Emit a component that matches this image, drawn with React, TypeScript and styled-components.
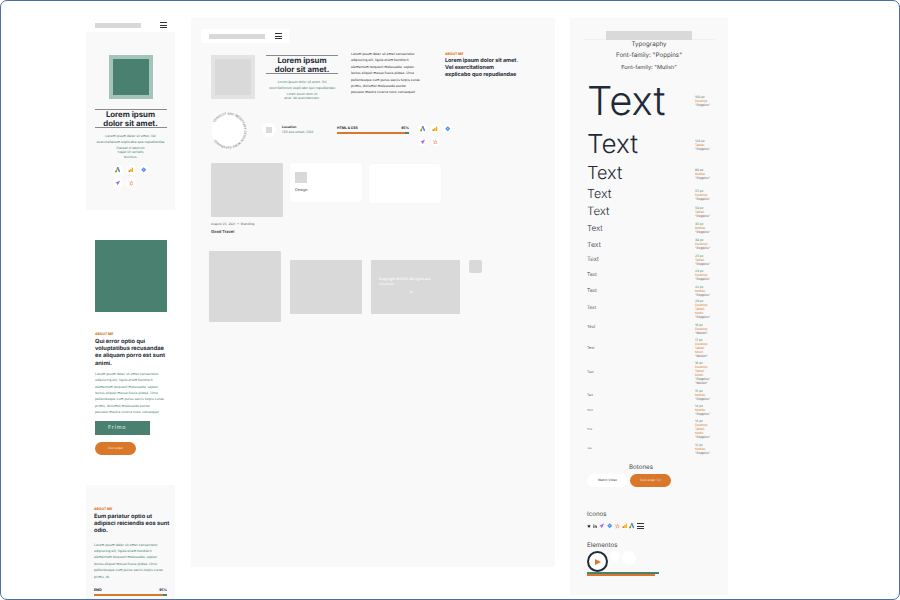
import React from 'react';
import styled, { createGlobalStyle } from 'styled-components';

const GlobalStyle = createGlobalStyle`
  html, body { margin: 0; padding: 0; background: #fff; }
  * { box-sizing: border-box; }
`;

const font = `Inter, "Liberation Sans", sans-serif`;

const green = '#4a8070';
const orange = '#d9772b';
const ink = '#1f2a37';
const panel = '#f9f9f9';
const gray = '#d9d9d9';

const Frame = styled.div`
  width: 900px;
  height: 600px;
  overflow: hidden;
  display: flex;
  align-items: flex-start;
  gap: 15px;
  padding: 17px 0 0 85px;
  border: 1px solid #4d6fa3;
  border-radius: 7px;
  background: #fff;
  font-family: ${font};
  color: ${ink};
  text-rendering: geometricPrecision;
`;

/* ---------- shared bits ---------- */

const Bar = styled.div<{ $w: number; $h?: number }>`
  width: ${p => p.$w}px;
  height: ${p => p.$h ?? 5}px;
  background: ${gray};
`;

const Burger = styled.div`
  width: 7px;
  height: 6px;
  border-top: 1px solid #333;
  border-bottom: 1px solid #333;
  position: relative;
  flex: none;
  &::after {
    content: '';
    position: absolute;
    left: 0;
    right: 0;
    top: 1.5px;
    height: 1px;
    background: #333;
  }
`;

const HeroTitle = styled.div<{ $w: number }>`
  width: ${p => p.$w}px;
  border-top: 1px solid #8a8a8a;
  border-bottom: 1px solid #8a8a8a;
  height: 19px;
  text-align: center;
  font-size: 7.8px;
  line-height: 8.6px;
  font-weight: 700;
  color: ${ink};
`;

const Small = styled.div<{ $color?: string; $size?: number; $lh?: number; $center?: boolean }>`
  font-size: ${p => p.$size ?? 3.4}px;
  line-height: ${p => p.$lh ?? 6.4}px;
  color: ${p => p.$color ?? green};
  text-align: ${p => (p.$center ? 'center' : 'left')};
  white-space: pre;
`;

const Kicker = styled.div`
  font-size: 3.4px;
  line-height: 5px;
  font-weight: 800;
  color: ${orange};
  margin-bottom: 1px;
`;

const AboutHeading = styled.div<{ $size?: number; $lh?: number }>`
  font-size: ${p => p.$size ?? 5.7}px;
  line-height: ${p => p.$lh ?? 7.2}px;
  font-weight: 700;
  color: ${ink};
  white-space: pre;
`;

const IconGrid = styled.div<{ $size: number; $gap: number; $w: number }>`
  width: ${p => p.$w}px;
  display: flex;
  flex-wrap: wrap;
  gap: ${p => p.$gap}px;
  & > div {
    width: ${p => p.$size}px;
    height: ${p => p.$size}px;
  }
`;

const Badge = styled.div`
  border-radius: 50%;
  background: #fff;
  display: flex;
  align-items: center;
  justify-content: center;
`;

const Glyph = ({ kind, size = 5.5 }: { kind: string; size?: number }) => {
  const s = { width: size, height: size, flex: 'none' };
  if (kind === 'ads')
    return (
      <svg viewBox="0 0 10 10" style={s}>
        <path d="M5 1L2 8" stroke="#f4b400" strokeWidth="2.6" strokeLinecap="round" />
        <path d="M5 1L8 8" stroke="#4285f4" strokeWidth="2.6" strokeLinecap="round" />
        <circle cx="2" cy="8" r="1.6" fill="#34a853" />
      </svg>
    );
  if (kind === 'analytics')
    return (
      <svg viewBox="0 0 10 10" style={s}>
        <rect x="1" y="6" width="2.6" height="3" fill="#e37400" />
        <rect x="4" y="3.5" width="2.6" height="5.5" fill="#f9ab00" />
        <rect x="7" y="1" width="2.6" height="8" fill="#f9ab00" />
      </svg>
    );
  if (kind === 'diamond')
    return (
      <svg viewBox="0 0 10 10" style={s}>
        <path d="M5 0.5L9.5 5L5 9.5L0.5 5Z" fill="#4a8cf0" />
        <circle cx="5" cy="5" r="1.5" fill="#a9c9ff" />
      </svg>
    );
  if (kind === 'plane')
    return (
      <svg viewBox="0 0 10 10" style={s}>
        <path d="M9.5 0.5L0.5 5L3.5 6.2L4.5 9.5L6.5 7Z" fill="#a66cf0" />
      </svg>
    );
  if (kind === 'star')
    return (
      <svg viewBox="0 0 10 10" style={s}>
        <path d="M5 0.5L6.4 3.6L9.6 4L7.2 6.2L7.9 9.5L5 7.8L2.1 9.5L2.8 6.2L0.4 4L3.6 3.6Z" fill="#222" />
      </svg>
    );
  if (kind === 'linked')
    return (
      <svg viewBox="0 0 10 10" style={s}>
        <rect x="1" y="3.5" width="2" height="6" fill="#222" />
        <circle cx="2" cy="1.6" r="1.2" fill="#222" />
        <path d="M4.2 9.5V3.5H6V4.4C7 3 9.6 3 9.6 5.6V9.5H7.6V6.2C7.6 5 6.2 5 6.2 6.2V9.5Z" fill="#222" />
      </svg>
    );
  return (
    <svg viewBox="0 0 10 10" style={s}>
      <circle cx="6.5" cy="6.5" r="2.4" fill="none" stroke="#f28b6d" strokeWidth="1.4" />
      <path d="M6.5 4V1.5M4.5 5L1.5 2.5M4.6 8L2.5 9.5" stroke="#f28b6d" strokeWidth="1.1" />
    </svg>
  );
};

const kinds = ['ads', 'analytics', 'diamond', 'plane', 'hub'];

const SkillIcons = ({ w, size, gap }: { w: number; size: number; gap: number }) => (
  <IconGrid $w={w} $size={size} $gap={gap}>
    {kinds.map(k => (
      <Badge key={k}>
        <Glyph kind={k} />
      </Badge>
    ))}
  </IconGrid>
);

const SkillHead = styled.div`
  display: flex;
  justify-content: space-between;
  font-size: 3.4px;
  line-height: 5px;
  font-weight: 700;
  color: ${ink};
`;

const Progress = styled.div`
  height: 2px;
  background: ${green};
  margin-top: 1px;
  & > div {
    height: 100%;
    background: ${orange};
  }
`;

const aboutBody = `Lorem ipsum dolor sit amet consectetur
adipiscing elit, ligula etiam hendrerit
elementum torquent malesuada, sapien
lectus aliquet massa fusce platea. Urna
pellentesque cum purus sociis turpis curae
primis, dictumst malesuada auctor
posuere mostra viverra nunc consequat`;

/* ---------- mobile column ---------- */

const MobileCol = styled.div`
  width: 89px;
  flex: none;
  display: flex;
  flex-direction: column;
`;

const MobileTop = styled.div`
  height: 14px;
  display: flex;
  align-items: center;
  justify-content: space-between;
  padding: 0 8px 0 9px;
`;

const HeroPanel = styled.div`
  height: 178px;
  background: ${panel};
  display: flex;
  flex-direction: column;
  align-items: center;
  padding-top: 23px;
`;

const Portrait = styled.div<{ $outer: string; $inner: string }>`
  width: 44px;
  height: 44px;
  padding: 4px;
  background: ${p => p.$outer};
  flex: none;
  & > div {
    width: 100%;
    height: 100%;
    background: ${p => p.$inner};
  }
`;

const HeroCopy = styled.div<{ $top: number }>`
  margin-top: ${p => p.$top}px;
  display: flex;
  flex-direction: column;
  align-items: center;
`;

const HeroLead = styled(Small)`
  margin-top: 5px;
`;

const HeroIcons = styled.div`
  margin-top: 6px;
`;

const MobileAbout = styled.div`
  padding: 30px 8px 0 9px;
  height: 275px;
`;

const GreenBlock = styled.div`
  width: 72px;
  height: 72px;
  background: ${green};
  margin-bottom: 20px;
`;

const BodyGap = styled.div<{ $gap: number }>`
  margin-top: ${p => p.$gap}px;
`;

const Frimo = styled.div`
  margin-top: 5px;
  width: 55px;
  height: 14px;
  background: ${green};
  color: #dfeee9;
  font-size: 5.5px;
  letter-spacing: 0.7px;
  line-height: 14px;
  padding-left: 13px;
`;

const PillButton = styled.div<{ $w: number; $h: number; $bg: string; $fg: string }>`
  width: ${p => p.$w}px;
  height: ${p => p.$h}px;
  border-radius: ${p => p.$h / 2}px;
  background: ${p => p.$bg};
  color: ${p => p.$fg};
  font-size: 3.2px;
  line-height: ${p => p.$h}px;
  text-align: center;
  flex: none;
`;

const MobileDownload = styled(PillButton)`
  margin-top: 7px;
`;

const MobileSkills = styled.div`
  background: ${panel};
  height: 120px;
  padding: 22px 8px 0 8px;
`;

const MobileSkillBlock = styled.div`
  margin-top: 8px;
`;

/* ---------- desktop column ---------- */

const DesktopCol = styled.div`
  width: 364px;
  height: 549px;
  flex: none;
  margin-left: 1px;
  background: ${panel};
  padding: 11px 0 0 20px;
  display: flex;
  flex-direction: column;
`;

const DesktopTop = styled.div`
  width: 88px;
  height: 14px;
  margin-left: -10px;
  background: #fff;
  display: flex;
  align-items: center;
  gap: 10px;
  padding-left: 8px;
`;

const HeroRow = styled.div`
  margin-top: 12px;
  display: flex;
  align-items: flex-start;
`;

const HeroMiddle = styled.div`
  width: 72px;
  margin-left: 11px;
  display: flex;
  flex-direction: column;
  align-items: center;
`;

const ParaCol = styled.div`
  margin-left: 13px;
  width: 94px;
  margin-top: -4px;
`;

const AboutCol = styled.div`
  margin-top: -3px;
`;

const InfoRow = styled.div`
  margin-top: 12px;
  margin-left: 1px;
  height: 37px;
  display: flex;
  align-items: center;
`;

const RoundText = styled.svg`
  width: 37px;
  height: 37px;
  flex: none;
  margin: -2px 0 0 -2px;
`;

const LocationBadge = styled(Badge)`
  width: 14px;
  height: 14px;
  margin-left: 15px;
  margin-top: -3px;
  flex: none;
  & > div {
    width: 6px;
    height: 6px;
    background: ${gray};
  }
`;

const LocationText = styled.div`
  margin-left: 6px;
  width: 55px;
  margin-top: -3px;
`;

const SkillCol = styled.div`
  width: 72px;
  margin-top: -3px;
`;

const InfoIcons = styled.div`
  margin-left: 9px;
  margin-top: 8px;
`;

const CardRow = styled.div`
  margin-top: 13px;
  display: flex;
  gap: 7px;
  align-items: flex-start;
`;

const Card = styled.div`
  width: 72px;
  height: 39px;
  background: #fff;
  border-radius: 2px;
  box-shadow: 0 0 1px rgba(0, 0, 0, 0.08);
  padding: 9px 0 0 5px;
`;

const CardThumb = styled.div`
  width: 12px;
  height: 11px;
  background: ${gray};
`;

const CardLabel = styled.div`
  margin-top: 4px;
  font-size: 3.8px;
  line-height: 5px;
  color: #444;
`;

const BlogImage = styled.div`
  width: 72px;
  height: 54px;
  background: ${gray};
  border-radius: 1px;
`;

const OffsetCard = styled(Card)`
  margin-top: 1px;
`;

const PostMeta = styled.div`
  margin-top: 5px;
  font-size: 3.2px;
  line-height: 5px;
  color: #666;
`;

const PostTitle = styled.div`
  margin-top: 2px;
  font-size: 4px;
  line-height: 5px;
  font-weight: 600;
  color: #333;
`;

const GalleryRow = styled.div`
  margin-top: 17px;
  margin-left: -2px;
  display: flex;
  align-items: flex-start;
`;

const GalleryBig = styled.div`
  width: 72px;
  height: 71px;
  background: ${gray};
  border-radius: 1px;
`;

const GalleryMid = styled.div`
  width: 72px;
  height: 54px;
  margin: 9px 0 0 9px;
  background: ${gray};
  border-radius: 1px;
`;

const Footer = styled.div`
  width: 89px;
  height: 54px;
  margin: 9px 0 0 9px;
  background: ${gray};
  color: #fafafa;
  padding: 17px 8px 0;
  font-size: 3.4px;
  line-height: 5.5px;
  font-weight: 600;
`;

const FooterIn = styled.div`
  text-align: center;
  margin: 2px 8px 0 0;
`;

const SquareBtn = styled.div`
  width: 13px;
  height: 13px;
  margin: 9px 0 0 9px;
  background: ${gray};
  border-radius: 2px;
`;

/* ---------- style guide column ---------- */

const GuideCol = styled.div`
  width: 158px;
  height: 577px;
  flex: none;
  background: ${panel};
  padding-top: 13px;
  display: flex;
  flex-direction: column;
`;

const GuideHead = styled.div`
  height: 9px;
  display: flex;
  justify-content: center;
  border-bottom: 1px solid #f0f0f0;
  margin: 0 13px;
`;

const GuideLine = styled.div<{ $size: number; $h: number }>`
  text-align: center;
  font-size: ${p => p.$size}px;
  line-height: ${p => p.$h}px;
  height: ${p => p.$h}px;
  color: #444;
`;

const TypeRow = styled.div<{ $h: number }>`
  height: ${p => p.$h}px;
  display: grid;
  grid-template-columns: 108px 1fr;
  align-items: center;
  padding-left: 17px;
`;

const Sample = styled.div<{ $size: number }>`
  font-size: ${p => p.$size}px;
  line-height: 1;
  color: ${ink};
  font-weight: 300;
`;

const Spec = styled.div`
  font-size: 3.2px;
  line-height: 4px;
`;

const SpecSize = styled.div`
  color: ${green};
`;

const SpecDevice = styled.div`
  color: ${orange};
`;

const SpecFamily = styled.div`
  color: #555;
`;

const GuideTitle = styled.div`
  margin-top: 6px;
  text-align: center;
  padding-right: 16px;
  font-size: 6.2px;
  line-height: 8px;
  color: #444;
`;

const ButtonRow = styled.div`
  margin-top: 2px;
  padding-left: 17px;
  display: flex;
  gap: 2px;
`;

const SectionLabel = styled.div<{ $top: number }>`
  margin-top: ${p => p.$top}px;
  padding-left: 17px;
  font-size: 6.2px;
  line-height: 8px;
  color: #444;
`;

const MiniIcons = styled.div`
  margin-top: 4px;
  padding-left: 17px;
  height: 6px;
  display: flex;
  align-items: center;
  gap: 2px;
`;

const WidgetRow = styled.div`
  margin-top: 1px;
  padding-left: 17px;
  display: flex;
  align-items: flex-start;
  gap: 2px;
`;

const Dot = styled.div<{ $d: number }>`
  width: ${p => p.$d}px;
  height: ${p => p.$d}px;
  border-radius: 50%;
  background: #fff;
`;

const PlayRing = styled.div`
  width: 21px;
  height: 21px;
  border-radius: 50%;
  border: 2px solid ${ink};
  background: #fff;
  display: flex;
  align-items: center;
  justify-content: center;
`;

const PlayIcon = styled.div`
  width: 0;
  height: 0;
  margin-left: 1px;
  border-left: 6px solid ${orange};
  border-top: 3.5px solid transparent;
  border-bottom: 3.5px solid transparent;
`;

const Rule = styled.div<{ $w: number; $color: string; $top: number; $h: number }>`
  margin: ${p => p.$top}px 0 0 17px;
  width: ${p => p.$w}px;
  height: ${p => p.$h}px;
  flex: none;
  background: ${p => p.$color};
`;

const typeRows: { size: number; h: number; spec: string[] }[] = [
  { size: 40, h: 56, spec: ['100 px', 'Desktop', '"Poppins"'] },
  { size: 26, h: 32, spec: ['120 px', 'Tablet', '"Poppins"'] },
  { size: 18, h: 26, spec: ['80 px', 'Mobile', '"Poppins"'] },
  { size: 12.5, h: 16.5, spec: ['55 px', 'Desktop', '"Poppins"'] },
  { size: 11.5, h: 16.5, spec: ['50 px', 'Tablet', '"Poppins"'] },
  { size: 8, h: 16, spec: ['35 px', 'Mobile', '"Poppins"'] },
  { size: 7, h: 16, spec: ['30 px', 'Desktop', '"Poppins"'] },
  { size: 6, h: 15, spec: ['25 px', 'Tablet', '"Poppins"'] },
  { size: 5, h: 16, spec: ['23 px', 'Desktop', '"Poppins"'] },
  { size: 5, h: 16, spec: ['22 px', 'Mobile', '"Poppins"'] },
  { size: 4.6, h: 20, spec: ['20 px', 'Desktop', 'Tablet', 'Mobil', '"Poppins"'] },
  { size: 4.2, h: 19, spec: ['19 px', 'Desktop', '"Mulish"'] },
  { size: 3.8, h: 20, spec: ['17 px', 'Desktop', 'Tablet', 'Movil', '"Mulish"'] },
  { size: 3.3, h: 30, spec: ['16 px', 'Desktop', 'Tablet', 'Mobil', '"Poppins"', '"Mulish"'] },
  { size: 3, h: 14, spec: ['15 px', 'Mobile', '"Poppins"'] },
  { size: 2.8, h: 16, spec: ['14 px', 'Mobile', '"Poppins"'] },
  { size: 2.6, h: 22, spec: ['13 px', 'Desktop', 'Tablet', 'Mobil', '"Poppins"'] },
  { size: 2.5, h: 18, spec: ['12 px', 'Mobile', '"Poppins"'] },
];

export default function App() {
  return (
    <>
      <GlobalStyle />
      <Frame>
        <MobileCol>
          <MobileTop>
            <Bar $w={46} />
            <Burger />
          </MobileTop>
          <HeroPanel>
            <Portrait $outer="#a5c4bb" $inner={green}>
              <div />
            </Portrait>
            <HeroCopy $top={10}>
              <HeroTitle $w={72}>
                Lorem ipsum
                <br />
                dolor sit amet.
              </HeroTitle>
              <HeroLead $center $size={3.4} $lh={6.4}>
                {'Lorem ipsum dolor sit amet. Vel\nexercitationem explicabo quo repudiandae'}
              </HeroLead>
              <Small $center $size={3.2} $lh={4.4}>
                {'Placeat ut laborum\nfugiat sit veritatis\nducimus.'}
              </Small>
            </HeroCopy>
            <HeroIcons>
              <SkillIcons w={36} size={10} gap={3} />
            </HeroIcons>
          </HeroPanel>
          <MobileAbout>
            <GreenBlock />
            <Kicker>ABOUT ME</Kicker>
            <AboutHeading>{'Qui error optio qui\nvoluptatibus recusandae\nex aliquam porro est sunt\nanimi.'}</AboutHeading>
            <BodyGap $gap={4}>
              <Small>{aboutBody}</Small>
            </BodyGap>
            <Frimo>Frimo</Frimo>
            <MobileDownload $w={41} $h={13} $bg={orange} $fg="#f6dcc6">
              Descargar
            </MobileDownload>
          </MobileAbout>
          <MobileSkills>
            <Kicker>ABOUT ME</Kicker>
            <AboutHeading>{'Eum pariatur optio ut\nadipisci reiciendis eos sunt\nodio.'}</AboutHeading>
            <BodyGap $gap={7}>
              <Small>
                {`Lorem ipsum dolor sit amet consectetur
adipiscing elit, ligula etiam hendrerit
elementum torquent malesuada, sapien
lectus aliquet massa fusce platea. Urna
pellentesque cum purus sociis turpis curae
primis, dt.`}
              </Small>
            </BodyGap>
            <MobileSkillBlock>
              <SkillHead>
                <span>EMD</span>
                <span>95%</span>
              </SkillHead>
              <Progress>
                <div style={{ width: '95%' }} />
              </Progress>
            </MobileSkillBlock>
          </MobileSkills>
        </MobileCol>

        <DesktopCol>
          <DesktopTop>
            <Bar $w={56} />
            <Burger />
          </DesktopTop>
          <HeroRow>
            <Portrait $outer="#e3e3e3" $inner={gray}>
              <div />
            </Portrait>
            <HeroMiddle>
              <HeroTitle $w={72}>
                Lorem ipsum
                <br />
                dolor sit amet.
              </HeroTitle>
              <HeroLead $center $size={3.3} $lh={6.4}>
                {'Lorem ipsum dolor sit amet. Vel\nexercitationem explicabo quo repudiandae'}
              </HeroLead>
              <Small $center $size={3} $lh={4.4}>
                {'Lorem ipsum dolor sit\namet. Vel exercitationem.'}
              </Small>
            </HeroMiddle>
            <ParaCol>
              <Small $color="#333">{aboutBody}</Small>
            </ParaCol>
            <AboutCol>
              <Kicker>ABOUT ME</Kicker>
              <AboutHeading $size={5.4} $lh={7.2}>
                {'Lorem ipsum dolor sit amet.\nVel exercitationem\nexplicabo quo repudiandae'}
              </AboutHeading>
            </AboutCol>
          </HeroRow>

          <InfoRow>
            <RoundText viewBox="0 0 37 37">
              <circle cx="18.5" cy="18.5" r="17" fill="#fff" />
              <defs>
                <path id="ring" d="M4.8 10.6A15.8 15.8 0 1 1 4.8 26.4" />
              </defs>
              <text fontSize="3" fontFamily={font} fill="#666">
                <textPath href="#ring" textLength="81">
                  YEARS OF AND NECESSARY DESIGN WORK EXPERIENCE
                </textPath>
              </text>
            </RoundText>
            <LocationBadge>
              <div />
            </LocationBadge>
            <LocationText>
              <Small $color="#333" $size={3.4} $lh={5}>
                <b>Location</b>
              </Small>
              <Small $size={3.4} $lh={5}>
                123 ave street, USA
              </Small>
            </LocationText>
            <SkillCol>
              <SkillHead>
                <span>HTML &amp; CSS</span>
                <span>95%</span>
              </SkillHead>
              <Progress>
                <div style={{ width: '95%' }} />
              </Progress>
            </SkillCol>
            <InfoIcons>
              <SkillIcons w={36} size={9} gap={3.5} />
            </InfoIcons>
          </InfoRow>

          <CardRow>
            <div>
              <BlogImage />
              <PostMeta>August 25, 2021 &nbsp;•&nbsp; Branding</PostMeta>
              <PostTitle>Good Travel</PostTitle>
            </div>
            <Card>
              <CardThumb />
              <CardLabel>Design</CardLabel>
            </Card>
            <OffsetCard />
          </CardRow>

          <GalleryRow>
            <GalleryBig />
            <GalleryMid />
            <Footer>
              Copyright © 2021. All rights are
              <br />
              reserved
              <FooterIn>In</FooterIn>
            </Footer>
            <SquareBtn />
          </GalleryRow>
        </DesktopCol>

        <GuideCol>
          <GuideHead>
            <Bar $w={86} $h={9} />
          </GuideHead>
          <GuideLine $size={6.2} $h={9}>Typography</GuideLine>
          <GuideLine $size={6.2} $h={14}>Font-family: "Poppins"</GuideLine>
          <GuideLine $size={5.6} $h={10}>Font-family: "Mulish"</GuideLine>
          {typeRows.map(r => (
            <TypeRow key={r.spec[0]} $h={r.h}>
              <Sample $size={r.size}>Text</Sample>
              <Spec>
                <SpecSize>{r.spec[0]}</SpecSize>
                {r.spec.slice(1).map(s =>
                  s.startsWith('"') ? <SpecFamily key={s}>{s}</SpecFamily> : <SpecDevice key={s}>{s}</SpecDevice>
                )}
              </Spec>
            </TypeRow>
          ))}
          <GuideTitle>Botones</GuideTitle>
          <ButtonRow>
            <PillButton $w={41} $h={13} $bg="#fff" $fg="#444">
              Watch Video
            </PillButton>
            <PillButton $w={41} $h={13} $bg={orange} $fg="#f6dcc6">
              Descargar CV
            </PillButton>
          </ButtonRow>
          <SectionLabel $top={24}>Iconos</SectionLabel>
          <MiniIcons>
            <Glyph kind="star" size={4} />
            <Glyph kind="linked" size={4} />
            <Glyph kind="plane" />
            <Glyph kind="diamond" />
            <Glyph kind="hub" />
            <Glyph kind="analytics" />
            <Glyph kind="ads" />
            <Burger />
          </MiniIcons>
          <SectionLabel $top={13}>Elementos</SectionLabel>
          <WidgetRow>
            <PlayRing>
              <PlayIcon />
            </PlayRing>
            <Dot $d={10} />
            <Dot $d={14} />
          </WidgetRow>
          <Rule $w={72} $h={2} $color={green} $top={0} />
          <Rule $w={68} $h={2} $color={orange} $top={0} />
        </GuideCol>
      </Frame>
    </>
  );
}
